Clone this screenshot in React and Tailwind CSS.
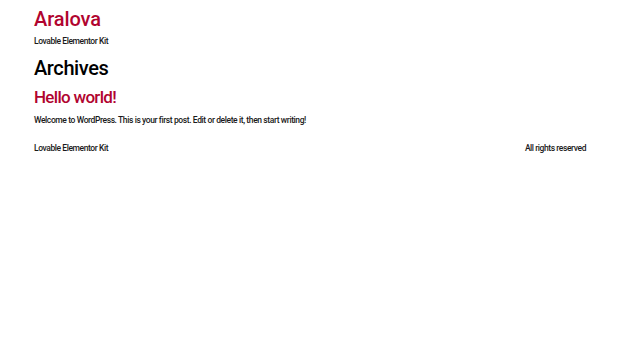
export default function App() {
  return (
    <div className="min-h-screen bg-white px-[34px] text-[#1a1a1a]" style={{ fontFamily: "Roboto, sans-serif" }}>
      <header className="pt-[6px]">
        <div className="text-[20px] font-medium leading-[26px] tracking-[-0.1px] text-[#b1042f]">Aralova</div>
        <p className="mt-[3px] text-[8.5px] font-medium leading-[12px] tracking-[-0.42px]">Lovable Elementor Kit</p>
      </header>
      <main>
        <h1 className="mt-[8px] text-[20px] font-medium leading-[26px] tracking-[-0.4px] text-black">Archives</h1>
        <h2 className="mt-[5px] text-[17px] font-medium leading-[22px] tracking-[-0.7px] text-[#b1042f]">Hello world!</h2>
        <p className="mt-[6px] text-[8.5px] font-medium leading-[12px] tracking-[-0.4px]">
          Welcome to WordPress. This is your first post. Edit or delete it, then start writing!
        </p>
      </main>
      <footer className="mt-[16px] flex justify-between text-[8.5px] font-medium leading-[12px] tracking-[-0.42px]">
        <span>Lovable Elementor Kit</span>
        <span>All rights reserved</span>
      </footer>
    </div>
  )
}
